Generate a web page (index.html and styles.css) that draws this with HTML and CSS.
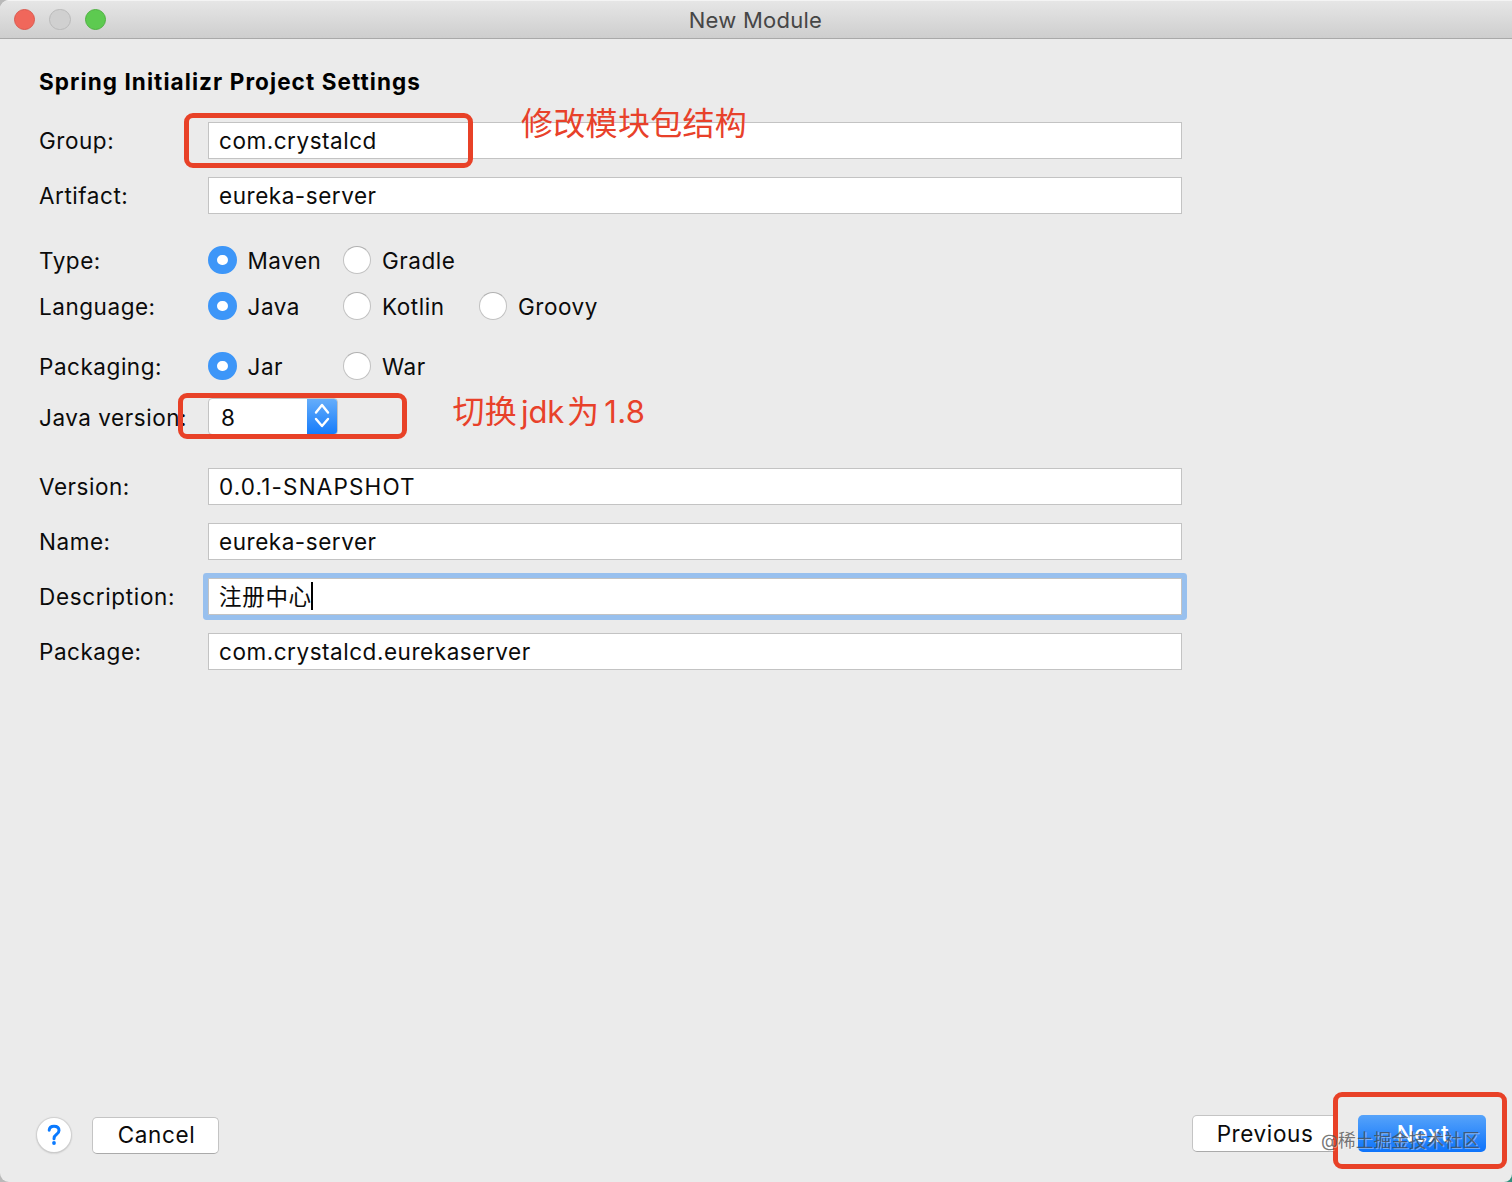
FILE: index.html
```html
<!DOCTYPE html>
<html lang="zh-CN">
<head>
<meta charset="utf-8">
<title>New Module</title>
<link rel="stylesheet" href="styles.css">
</head>
<body>
<div class="window">
  <header class="titlebar">
    <div class="lights"><i class="light close"></i><i class="light minimize"></i><i class="light expand"></i></div>
    <div class="title">New Module</div>
  </header>
  <main class="content">
    <h1 class="heading">Spring Initializr Project Settings</h1>
    <div class="row"><label>Group:</label><div class="field">com.crystalcd</div>
      <div class="mark mark-group"></div><div class="note note-group">修改模块包结构</div></div>
    <div class="row gap-artifact"><label>Artifact:</label><div class="field">eureka-server</div></div>
    <div class="row gap-type"><label>Type:</label>
      <div class="radios"><span class="option"><i class="radio on"></i>Maven</span><span class="option"><i class="radio"></i>Gradle</span></div></div>
    <div class="row gap-language"><label>Language:</label>
      <div class="radios"><span class="option"><i class="radio on"></i>Java</span><span class="option"><i class="radio"></i>Kotlin</span><span class="option"><i class="radio"></i>Groovy</span></div></div>
    <div class="row gap-packaging"><label>Packaging:</label>
      <div class="radios"><span class="option"><i class="radio on"></i>Jar</span><span class="option"><i class="radio"></i>War</span></div></div>
    <div class="row gap-java"><label>Java version:</label>
      <div class="select"><span class="value">8</span><span class="stepper"><svg width="30" height="36" viewBox="0 0 30 36" fill="none" stroke="#fff" stroke-width="2.4" stroke-linecap="round" stroke-linejoin="round"><path d="M9 13.5 15 6 21 13.5M9 20 15 27 21 20"/></svg></span></div>
      <div class="mark mark-java"></div><div class="note note-java"><span>切换</span><span class="latin jdk">jdk</span><span>为</span><span class="latin num">1.8</span></div></div>
    <div class="row gap-version"><label>Version:</label><div class="field version">0.0.1-SNAPSHOT</div></div>
    <div class="row gap-name"><label>Name:</label><div class="field">eureka-server</div></div>
    <div class="row gap-description"><label class="wide">Description:</label><div class="field focused">注册中心<i class="caret"></i></div></div>
    <div class="row gap-package"><label>Package:</label><div class="field">com.crystalcd.eurekaserver</div></div>
  </main>
  <footer class="actions">
    <div class="help"><svg width="34" height="34" viewBox="1 1 34 34" fill="none" stroke="#0a7aff" stroke-width="3" stroke-linecap="round"><path d="M13.2 13.2C13.4 10.7 15.1 9.3 18 9.3 21 9.3 23 10.9 23 13.4 23 15.3 22 16.4 20.4 17.5 18.6 18.7 18 19.5 18 21.7"/><circle cx="18" cy="26" r="1.9" fill="#0a7aff" stroke="none"/></svg></div>
    <div class="button cancel">Cancel</div>
    <div class="button previous">Previous</div>
    <div class="button next">Next</div>
    <div class="mark mark-next"></div>
    <div class="watermark">@稀土掘金技术社区</div>
  </footer>
</div>
</body>
</html>
```
FILE: styles.css
```css
* { box-sizing: border-box; }
html { background: linear-gradient(90deg, #b9b9b9 1490px, #2f8f7c 1500px); }
body {
  margin: 0;
  height: 1182px;
  overflow: hidden;
  font: 22.5px/37px Inter, "Noto Sans CJK SC", sans-serif;
  letter-spacing: 0.54px;
  color: #0b0b0b;
}
.window {
  display: flex;
  flex-direction: column;
  height: 1182px;
  background: #ebebeb;
  border-radius: 9px 0 8px 9px;
  overflow: hidden;
}
.titlebar {
  display: grid;
  grid-template-columns: 1fr auto 1fr;
  height: 39px;
  padding-left: 14px;
  align-items: center;
  background: linear-gradient(#e6e6e6, #cecece);
  border-top: 1px solid #f4f4f4;
  border-bottom: 1px solid #a9a9a9;
}
.lights { display: flex; gap: 14px; }
.light {
  width: 21.3px;
  height: 21.3px;
  border-radius: 50%;
  border: 1px solid #b9b9b9;
  background: #d0d0d0;
}
.close { background: #f0675b; border-color: #d9594f; }
.expand { background: #5dca50; border-color: #4fb142; }
.title { color: #464646; font-size: 22px; line-height: 36px; letter-spacing: 0.25px; padding: 0 15px 0 0; }
.content { display: flex; flex-direction: column; padding: 25px 0 0 39px; flex: 1; }
.heading { margin: 0 0 22px; font-size: 22.5px; line-height: 36px; font-weight: 700; color: #000; letter-spacing: 1.08px; }
.row { display: grid; grid-template-columns: 169px 974px; height: 37px; position: relative; white-space: nowrap; }
.wide { letter-spacing: 0.66px; }
.gap-artifact, .gap-name, .gap-description { margin-top: 18px; }
.gap-type { margin-top: 28px; }
.gap-language { margin-top: 9px; }
.gap-packaging { margin-top: 23px; }
.gap-java { margin-top: 14px; }
.gap-version { margin-top: 32px; }
.gap-package { margin-top: 18px; }
.field {
  display: flex;
  align-items: center;
  height: 37px;
  padding-left: 10px;
  background: #fff;
  border: 1px solid #c3c3c3;
}
.version { letter-spacing: 1.15px; }
.focused { box-shadow: 0 0 0 5px #98c0ee; border-radius: 1px; letter-spacing: 0.7px; padding-bottom: 1px; }
.caret { width: 2px; height: 28px; margin-left: -1px; background: #000; }
.radios { display: grid; grid-template-columns: 134.5px 136px auto; }
.option { display: flex; align-items: center; gap: 11px; }
.radio {
  width: 28.5px;
  height: 28.5px;
  border-radius: 50%;
  background: #fff;
  border: 1px solid #c2c2c2;
  border-top-color: #b0b0b0;
  margin-top: -1px;
}
.on { border: 9px solid #3d96f8; background: #fff; }
.select { display: flex; width: 130px; height: 37px; background: #fff; border: 1px solid #c3c3c3; border-radius: 4px; margin-top: -1px; overflow: hidden; }
.value { flex: 1; padding-left: 12px; }
.stepper { width: 30px; height: 36px; background: linear-gradient(#65adfa, #147bfb); }
.stepper svg, .help svg { display: block; }
.mark { position: absolute; border: 5px solid #e84127; border-radius: 9px; }
.mark-group { left: 145px; top: -9px; width: 288.5px; height: 55px; }
.mark-java { left: 139px; top: -6px; width: 228.5px; height: 46px; }
.mark-next { right: 5px; top: 0; width: 174px; height: 77px; }
.note { position: absolute; color: #e8412a; font-size: 32px; line-height: 40px; letter-spacing: 0.3px; }
.note-group { left: 482px; top: -18px; }
.note-java { left: 413.5px; top: -7px; display: flex; }
.latin { font-size: 31px; }
.jdk { padding: 0 3px 0 4px; letter-spacing: -0.2px; }
.num { padding-left: 5px; letter-spacing: 0.3px; }
.actions { display: flex; position: relative; height: 90px; padding: 24px 26px 0 37px; align-items: flex-start; }
.help { width: 34px; height: 34px; border-radius: 50%; background: #fff; box-shadow: 0 0 1px 1px #cfcfcf, 0 1px 2px #aaa; margin: 2px 21px 0 0; }
.button { width: 127px; height: 37px; border: 1px solid #c4c4c4; border-bottom-color: #aaa; border-radius: 5px; background: #fff; line-height: 35px; text-align: center; letter-spacing: 0.6px; }
.cancel { margin-top: 1px; padding-left: 2px; line-height: 34px; }
.previous { width: 146px; margin: -1px 20px 0 auto; }
.next { width: 128px; margin-top: -1px; padding-left: 2px; color: #fff; border: 0; background: linear-gradient(#56a3fa, #0d73fb); line-height: 37px; font-weight: 500; }
.watermark { position: absolute; left: 1321px; top: 35px; font-size: 17.7px; line-height: 28px; letter-spacing: 0; color: rgba(70, 70, 70, 0.74); text-shadow: 1px 1px 0 rgba(255, 255, 255, 0.4); white-space: nowrap; }
```
